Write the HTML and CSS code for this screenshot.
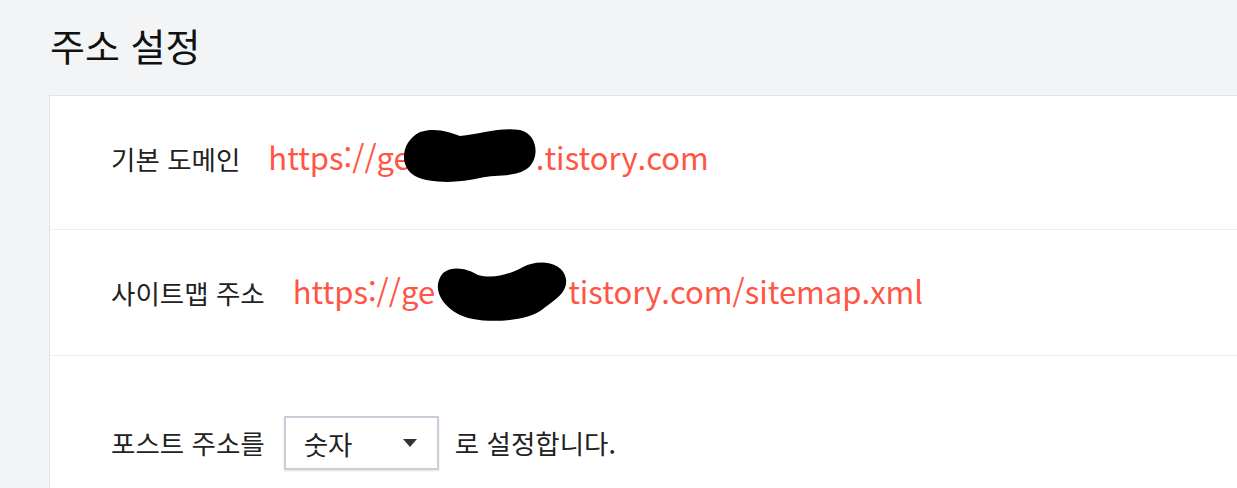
FILE: index.html
```html
<!DOCTYPE html>
<html lang="ko">
<head>
<meta charset="utf-8">
<link rel="stylesheet" href="styles.css">
</head>
<body>
<div class="page">
  <h1 class="title">주소 설정</h1>
  <div class="card">
    <div class="row row-domain">
      <span class="label">기본 도메인</span>
      <span class="link">https://ge<span class="gap gap1"><svg class="blob blob1" width="140" height="54" viewBox="0 0 140 54"><path d="M20 4 C35 -1 50 4 60 8 C80 6 100 -1 120 2 C138 6 140 30 128 40 C115 50 95 46 80 50 C60 55 30 56 15 48 C0 40 -1 15 20 4 Z" fill="#000"/></svg></span>.tistory.com</span>
    </div>
    <div class="row row-sitemap">
      <span class="label">사이트맵 주소</span>
      <span class="link">https://ge<span class="gap gap2"><svg class="blob blob2" width="136" height="62" viewBox="0 0 136 62"><path d="M10 12 C20 4 35 8 45 14 C60 18 75 14 90 6 C105 -2 130 0 133 18 C135 32 120 40 110 48 C95 60 60 62 40 58 C15 54 -5 30 10 12 Z" fill="#000"/></svg></span>tistory.com/sitemap.xml</span>
    </div>
    <div class="row row-post">
      <span class="label">포스트 주소를</span>
      <div class="select">
        <span class="select-text">숫자</span>
        <span class="caret"></span>
      </div>
      <span class="label">로 설정합니다.</span>
    </div>
  </div>
</div>
</body>
</html>
```
FILE: styles.css
```css
* { box-sizing: border-box; }
html, body { margin: 0; padding: 0; }
body {
  background: #f3f4f6;
  font-family: "Noto Sans CJK KR", "Noto Sans", sans-serif;
  width: 1237px;
  height: 488px;
  overflow: hidden;
}
.page {
  padding: 17px 0 0 49px;
}
.title {
  margin: 0 0 0 1px;
  font-size: 38px;
  font-weight: 400;
  line-height: 56px;
  color: #111;
}
.card {
  margin-top: 22px;
  background: #fff;
  border: 1.5px solid #e1e4ea;
  border-right: 0;
  width: 1200px;
  height: 500px;
}
.row {
  display: flex;
  align-items: center;
  padding-left: 61px;
  border-bottom: 1.5px solid #edeef3;
}
.row-domain { height: 134px; padding-bottom: 8px; }
.row-sitemap { height: 126px; }
.row-post { height: 180px; border-bottom: 0; align-items: flex-start; padding-top: 60px; }
.label {
  font-size: 26.5px;
  color: #222;
  line-height: 54px;
}
.link {
  font-size: 31px;
  color: #ff5544;
  margin-left: 28px;
  line-height: 40px;
  position: relative;
  top: -2px;
}
.gap { display: inline-block; position: relative; height: 1px; }
.gap1 { width: 125px; }
.gap2 { width: 133px; }
.blob { position: absolute; }
.blob1 { left: -11px; top: -41px; }
.blob2 { left: -2px; top: -42px; }
.select {
  width: 155px;
  height: 54px;
  margin: 0 16px 0 19px;
  border: 2px solid #c8cfd8;
  box-shadow: 0 1px 2px rgba(0,0,0,0.12);
  display: flex;
  align-items: center;
  padding-left: 18px;
  padding-right: 20px;
  justify-content: space-between;
}
.select-text { font-size: 26.5px; color: #222; }
.caret {
  width: 0; height: 0;
  border-left: 7px solid transparent;
  border-right: 7px solid transparent;
  border-top: 8px solid #333;
}
```
